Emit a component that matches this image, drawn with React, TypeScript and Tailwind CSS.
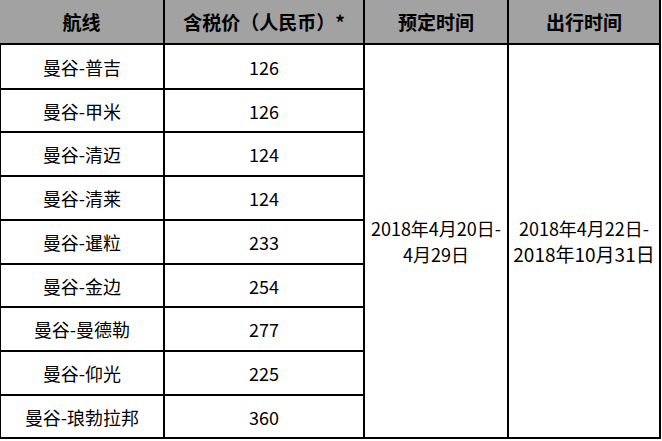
import type { FC, ReactNode } from "react";

const routes: [string, number][] = [
  ["曼谷-普吉", 126],
  ["曼谷-甲米", 126],
  ["曼谷-清迈", 124],
  ["曼谷-清莱", 124],
  ["曼谷-暹粒", 233],
  ["曼谷-金边", 254],
  ["曼谷-曼德勒", 277],
  ["曼谷-仰光", 225],
  ["曼谷-琅勃拉邦", 360],
];

const Head: FC<{ children: ReactNode }> = ({ children }) => (
  <div className="flex items-center justify-center bg-[#a2a2a2] border-r-2 border-b-2 border-black text-[19px] font-bold text-black">
    {children}
  </div>
);

const Cell: FC<{ children: ReactNode; first?: boolean }> = ({ children, first }) => (
  <div
    className={`flex items-center justify-center border-r-2 border-b-2 border-black text-[18px] text-black ${
      first ? "border-l" : ""
    }`}
  >
    {children}
  </div>
);

export default function App() {
  return (
    <div className="w-[662px] h-[441px] bg-white font-['Noto_Sans_CJK_SC',sans-serif] leading-none">
      <div className="grid w-[661px] grid-cols-[165px_200px_144px_152px] grid-rows-[45px_45px_43px_44px_44px_44px_43px_44px_44px_43px]">
        <Head>航线</Head>
        <Head>含税价（人民币）*</Head>
        <Head>预定时间</Head>
        <Head>出行时间</Head>

        {routes.map(([name, price], i) => (
          <div key={name} className="contents">
            <Cell first>{name}</Cell>
            <Cell>{price}</Cell>
            {i === 0 && (
              <>
                <div className="row-span-9 flex flex-col items-center justify-center border-r-2 border-b-2 border-black text-[18px] text-black leading-[26px]">
                  <span>2018年4月20日-</span>
                  <span>4月29日</span>
                </div>
                <div className="row-span-9 flex flex-col items-center justify-center border-r-2 border-b-2 border-black text-[18px] text-black leading-[26px]">
                  <span>2018年4月22日-</span>
                  <span className="text-[19px]">2018年10月31日</span>
                </div>
              </>
            )}
          </div>
        ))}
      </div>
    </div>
  );
}
